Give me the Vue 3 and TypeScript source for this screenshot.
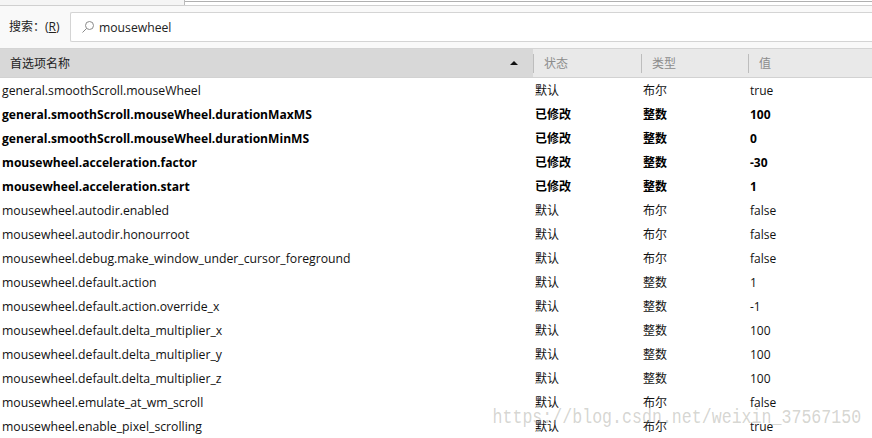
<script setup lang="ts">
interface Pref { name: string; status: string; type: string; value: string; bold?: boolean }
const d = '默认', m = '已修改', b = '布尔', i = '整数'
const rows: Pref[] = [
  { name: 'general.smoothScroll.mouseWheel', status: d, type: b, value: 'true' },
  { name: 'general.smoothScroll.mouseWheel.durationMaxMS', status: m, type: i, value: '100', bold: true },
  { name: 'general.smoothScroll.mouseWheel.durationMinMS', status: m, type: i, value: '0', bold: true },
  { name: 'mousewheel.acceleration.factor', status: m, type: i, value: '-30', bold: true },
  { name: 'mousewheel.acceleration.start', status: m, type: i, value: '1', bold: true },
  { name: 'mousewheel.autodir.enabled', status: d, type: b, value: 'false' },
  { name: 'mousewheel.autodir.honourroot', status: d, type: b, value: 'false' },
  { name: 'mousewheel.debug.make_window_under_cursor_foreground', status: d, type: b, value: 'false' },
  { name: 'mousewheel.default.action', status: d, type: i, value: '1' },
  { name: 'mousewheel.default.action.override_x', status: d, type: i, value: '-1' },
  { name: 'mousewheel.default.delta_multiplier_x', status: d, type: i, value: '100' },
  { name: 'mousewheel.default.delta_multiplier_y', status: d, type: i, value: '100' },
  { name: 'mousewheel.default.delta_multiplier_z', status: d, type: i, value: '100' },
  { name: 'mousewheel.emulate_at_wm_scroll', status: d, type: b, value: 'false' },
  { name: 'mousewheel.enable_pixel_scrolling', status: d, type: b, value: 'true' },
]
</script>

<template>
  <div class="page">
    <div class="topbar"><div class="tab"></div></div>
    <div class="search">
      <label class="label">搜索：(<u>R</u>)</label>
      <div class="field">
        <svg class="icon" width="14" height="14" viewBox="0 0 14 14" fill="none" stroke="#8a8a8a" stroke-width="1">
          <circle cx="8.5" cy="5.5" r="4" />
          <path d="M5.5 8.5 L1.5 12.5" />
        </svg>
        <span>mousewheel</span>
      </div>
    </div>
    <div class="head">
      <div class="hname"><span>首选项名称</span><i class="arrow"></i></div>
      <div class="hcol c1"><span>状态</span></div>
      <div class="hcol c2"><span>类型</span></div>
      <div class="hcol c3"><span>值</span></div>
    </div>
    <div class="rows">
      <div v-for="r in rows" :key="r.name" class="row" :class="{ bold: r.bold }">
        <div class="name">{{ r.name }}</div>
        <div class="status">{{ r.status }}</div>
        <div class="type">{{ r.type }}</div>
        <div class="value">{{ r.value }}</div>
      </div>
    </div>
    <div class="mark">https://blog.csdn.net/weixin_37567150</div>
  </div>
</template>

<style>
html, body { margin: 0; overflow: hidden; }
</style>

<style scoped>
.page {
  position: relative;
  width: 872px;
  height: 438px;
  overflow: hidden;
  background: #fff;
  font-family: "Open Sans", "Noto Sans CJK SC", sans-serif;
  font-size: 12px;
  color: #111;
}
.topbar { height: 5px; background: #f5f5f5; border-bottom: 1px solid #d0d0d0; }
.tab { margin-left: 184px; height: 5px; box-sizing: border-box; background: #fff; border-left: 1px solid #bbb; position: relative; }
.tab::before { content: ""; position: absolute; left: 0; right: 0; top: 1px; height: 1px; background: #b0b0b0; }
.search { display: flex; height: 42px; box-sizing: border-box; background: #f9f9f9; padding: 6px 0 6px 9px; align-items: stretch; }
.label { width: 61px; font-size: 12px; color: #222; line-height: 30px; }
.field { flex: 1; box-sizing: border-box; background: #fff; border: 1px solid #d4d4d4; border-right: 0; border-radius: 2px 0 0 2px; display: flex; align-items: center; padding-left: 10px; gap: 4px; font-size: 12.2px; color: #222; }
.head { display: flex; height: 30px; box-sizing: border-box; background: #e9e9e9; border-top: 1px solid #d4d4d4; border-bottom: 1px solid #d2d2d2; font-size: 12px; }
.hname { width: 533px; box-sizing: border-box; background: #d8d8d8; padding: 0 15px 0 10px; display: flex; align-items: center; justify-content: space-between; color: #222; }
.arrow { width: 0; height: 0; border: 4.5px solid transparent; border-top: 0; border-bottom: 4.5px solid #111; }
.hcol { display: flex; align-items: center; color: #8c8c8c; }
.hcol span { border-left: 1px solid #bdbdbd; height: 19px; line-height: 19px; padding-left: 10px; display: block; width: 96px; }
.c1 { width: 108px; }
.c2 { width: 107px; }
.rows { padding-top: 1px; }
.row { display: flex; height: 24px; line-height: 24px; white-space: nowrap; }
.name { width: 535px; padding-left: 2px; box-sizing: border-box; font-size: 12.25px; }
.bold .name { font-size: 12.1px; }
.status { width: 108px; }
.type { width: 107px; }
.bold { font-weight: 700; color: #000; }
.mark {
  position: absolute;
  right: 11px;
  top: 406px;
  white-space: nowrap;
  font-family: "Liberation Mono", monospace;
  font-size: 20.5px;
  transform: scaleX(0.81);
  transform-origin: right center;
  color: rgba(150, 150, 140, 0.4);
  pointer-events: none;
}
</style>
